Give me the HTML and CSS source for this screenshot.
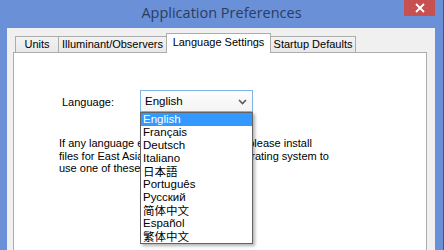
FILE: index.html
```html
<!DOCTYPE html>
<html lang="en">
<head>
    <meta charset="UTF-8">
    <title>Application Preferences</title>
    <link rel="stylesheet" href="styles.css">
</head>
<body>
    <div class="titlebar">
        <span class="title">Application Preferences</span>
        <button class="close-btn">
            <svg width="10" height="10" viewBox="0 0 10 10"><path d="M1 1 L9 9 M9 1 L1 9" stroke="#fff" stroke-width="1.8"/></svg>
        </button>
    </div>
    <div class="client">
        <div class="tab-links">
            <div class="tab tab-units">Units</div>
            <div class="tab tab-illum">Illuminant/Observers</div>
            <div class="tab tab-lang active">Language Settings</div>
            <div class="tab tab-startup">Startup Defaults</div>
        </div>
        <div class="tab-content">
            <div class="lang-row">
                <label class="lang-label">Language:</label>
                <div class="select">
                    <span>English</span>
                    <svg class="chevron" width="9" height="6" viewBox="0 0 9 6"><path d="M1 1 L4.5 4.5 L8 1" fill="none" stroke="#5a5a5a" stroke-width="1.6"/></svg>
                    <ul class="options">
                        <li class="selected">English</li>
                        <li>Français</li>
                        <li>Deutsch</li>
                        <li>Italiano</li>
                        <li class="cjk" lang="ja">日本語</li>
                        <li>Português</li>
                        <li>Русский</li>
                        <li class="cjk" lang="zh-CN">简体中文</li>
                        <li>Español</li>
                        <li class="cjk" lang="zh-TW">繁体中文</li>
                    </ul>
                </div>
            </div>
            <!-- the open list covers the middle of these lines -->
            <p class="note">If any language e<span class="covered">ntries show as boxes, </span>please install<br>files for East Asia<span class="covered">n scripts from your ope</span>rating system to<br>use one of these <span class="covered">languages.</span></p>
        </div>
    </div>
</body>
</html>
```

FILE: styles.css
```css
/* Window frame */
body {
    margin: 0;
    height: 250px;
    overflow: hidden;
    background-color: #6a90d7;
    font-family: "Liberation Sans", Arial, sans-serif;
    font-size: 11px;
    color: #000;
    border-right: 1px solid #3f5680;
    box-sizing: border-box;
}

.titlebar {
    position: relative;
    height: 28px;
    display: flex;
    justify-content: center;
    align-items: center;
}
.title {
    font-family: "Open Sans", "Noto Sans", sans-serif;
    font-size: 14.5px;
    color: #2a3d62;
    margin-top: -3px;
}
.close-btn {
    position: absolute;
    top: 0;
    right: 8px;
    width: 31px;
    height: 16px;
    border: none;
    padding: 0;
    background-color: #c75050;
    display: flex;
    align-items: center;
    justify-content: center;
}

.client {
    margin: 0 8px 0 7px;
    height: 222px;
    background-color: #f0f0f0;
    padding: 5px 0 0 6px;
    box-sizing: border-box;
}

/* Tabs */
.tab-links {
    display: flex;
    align-items: flex-end;
    height: 19px;
    padding-left: 2px;
    position: relative;
    z-index: 1;
}
.tab {
    height: 15px;
    line-height: 15px;
    border: 1px solid #acacac;
    border-bottom: none;
    background: linear-gradient(#f3f3f3, #e8e8e8);
    text-align: center;
    margin-right: -1px;
}
.tab-units { width: 42px; }
.tab-illum { width: 107px; }
.tab-lang { width: 103px; }
.tab-startup { width: 84px; }
.tab.active {
    height: 19px;
    line-height: 17px;
    background: #fff;
    position: relative;
    top: 1px;
}

.tab-content {
    width: 414px;
    height: 200px;
    background-color: #fff;
    border: 1px solid #acacac;
    box-sizing: border-box;
    padding: 37px 0 0 48px;
}

/* Language row */
.lang-row {
    display: flex;
    align-items: center;
}
.lang-label {
    width: 78px;
    padding-top: 1px;
}
.select {
    position: relative;
    width: 113px;
    height: 22px;
    box-sizing: border-box;
    border: 1px solid #7eb4ea;
    background: linear-gradient(#fdfdfd, #f4f4f4);
    display: flex;
    align-items: center;
    padding-left: 4px;
    font-size: 11.5px;
}
.chevron {
    position: absolute;
    right: 5px;
    top: 8px;
}
.options {
    position: absolute;
    top: 21px;
    left: -1px;
    width: 113px;
    margin: 0;
    padding: 0;
    list-style: none;
    background: #fff;
    border: 1px solid #646464;
    box-sizing: border-box;
    box-shadow: 2px 2px 3px rgba(0, 0, 0, 0.3);
    z-index: 2;
}
.options li {
    height: 13px;
    line-height: 13px;
    padding-left: 2px;
    font-size: 11.5px;
    white-space: nowrap;
}
.options li.selected {
    background-color: #3399ff;
    color: #fff;
}
.options li.cjk {
    font-family: "Noto Sans CJK JP", "Noto Sans CJK SC", sans-serif;
    font-size: 11.5px;
}
.options li.cjk:lang(zh-CN) { font-family: "Noto Sans CJK SC", sans-serif; }
.options li.cjk:lang(zh-TW) { font-family: "Noto Sans CJK TC", sans-serif; }

.note {
    margin: 25px 0 0 -3px;
    line-height: 12.5px;
}
.covered {
    visibility: hidden;
    word-spacing: -1px;
}
```
